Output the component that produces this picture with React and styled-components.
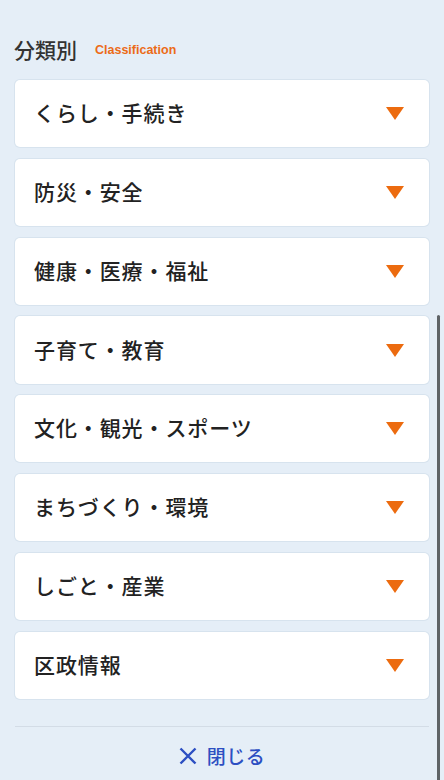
import React from 'react';
import styled, { createGlobalStyle } from 'styled-components';

const GlobalStyle = createGlobalStyle`
  html, body {
    margin: 0;
    padding: 0;
    background: #e5eef7;
  }
  body {
    font-family: "Noto Sans CJK JP", "Noto Sans", sans-serif;
    color: #222;
  }
`;

const Page = styled.div`
  position: relative;
  min-height: 780px;
  padding: 35px 15px 0;
  box-sizing: border-box;
  overflow: hidden;
`;

const Heading = styled.div`
  display: flex;
  align-items: center;
  gap: 18px;
  height: 28px;
  margin-bottom: 17px;
  margin-left: -1px;
  h2 {
    margin: 0;
    font-size: 21px;
    font-weight: 500;
    color: #333;
    line-height: 28px;
  }
  span {
    font-family: "Liberation Sans", Arial, sans-serif;
    font-size: 12.5px;
    font-weight: 700;
    color: #ec6b17;
    margin-top: 2px;
  }
`;

const List = styled.ul`
  list-style: none;
  margin: 0;
  padding: 0;
  display: flex;
  flex-direction: column;
  gap: 11.5px;
`;

const Card = styled.li`
  display: flex;
  align-items: center;
  justify-content: space-between;
  height: 67.3px;
  padding: 0 25px 0 19px;
  background: #fff;
  border-radius: 5px;
  box-shadow: 0 0 0 1px rgba(190, 205, 220, 0.35);
`;

const Label = styled.span`
  font-size: 21px;
  font-weight: 500;
  color: #222;
  letter-spacing: 0.9px;
  line-height: 1;
  margin-top: -2px;
`;

const Arrow = styled.svg`
  width: 18px;
  height: 13px;
  flex: none;
`;

const Footer = styled.div`
  margin-top: 27px;
  border-top: 1.5px solid #d3dce6;
  display: flex;
  justify-content: center;
  align-items: center;
  gap: 10px;
  height: 58px;
  color: #2c4fc2;
  font-size: 19px;
  font-weight: 500;
  letter-spacing: 0.5px;
`;

const Scrollbar = styled.div`
  position: absolute;
  right: 4px;
  top: 315px;
  width: 3px;
  height: 470px;
  border-radius: 2px;
  background: #5f6366;
`;

const items = [
  'くらし・手続き',
  '防災・安全',
  '健康・医療・福祉',
  '子育て・教育',
  '文化・観光・スポーツ',
  'まちづくり・環境',
  'しごと・産業',
  '区政情報',
];

const App = () => (
  <Page>
    <GlobalStyle />
    <Heading>
      <h2>分類別</h2>
      <span>Classification</span>
    </Heading>
    <List>
      {items.map((item) => (
        <Card key={item}>
          <Label>{item}</Label>
          <Arrow viewBox="0 0 18 13">
            <path d="M0 0 H18 L9 13 Z" fill="#ec6b0f" />
          </Arrow>
        </Card>
      ))}
    </List>
    <Footer>
      <svg width="18" height="18" viewBox="0 0 18 18">
        <path d="M1.5 1.5 L16.5 16.5 M16.5 1.5 L1.5 16.5" stroke="#2c4fc2" strokeWidth="2.4" />
      </svg>
      閉じる
    </Footer>
    <Scrollbar />
  </Page>
);

export default App;
